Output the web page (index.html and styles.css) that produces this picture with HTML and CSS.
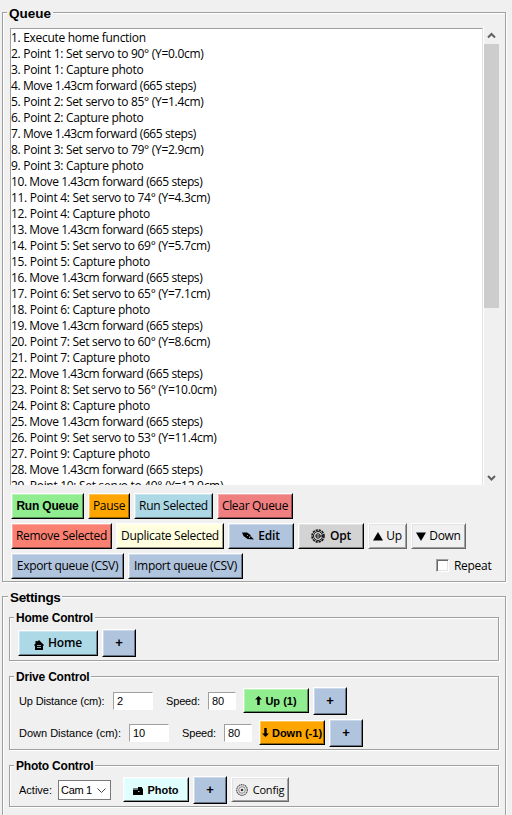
FILE: index.html
```html
<!DOCTYPE html>
<html lang="en">
<head>
<meta charset="utf-8">
<title>Queue</title>
<link rel="stylesheet" href="styles.css">
</head>
<body>
<section class="frame queue">
  <h2 class="title">Queue</h2>
  <div class="list-area">
    <ul class="list">
      <li>1. Execute home function</li>
      <li>2. Point 1: Set servo to 90° (Y=0.0cm)</li>
      <li>3. Point 1: Capture photo</li>
      <li class="move">4. Move 1.43cm forward (665 steps)</li>
      <li>5. Point 2: Set servo to 85° (Y=1.4cm)</li>
      <li>6. Point 2: Capture photo</li>
      <li class="move">7. Move 1.43cm forward (665 steps)</li>
      <li>8. Point 3: Set servo to 79° (Y=2.9cm)</li>
      <li>9. Point 3: Capture photo</li>
      <li class="move">10. Move 1.43cm forward (665 steps)</li>
      <li>11. Point 4: Set servo to 74° (Y=4.3cm)</li>
      <li>12. Point 4: Capture photo</li>
      <li class="move">13. Move 1.43cm forward (665 steps)</li>
      <li>14. Point 5: Set servo to 69° (Y=5.7cm)</li>
      <li>15. Point 5: Capture photo</li>
      <li class="move">16. Move 1.43cm forward (665 steps)</li>
      <li>17. Point 6: Set servo to 65° (Y=7.1cm)</li>
      <li>18. Point 6: Capture photo</li>
      <li class="move">19. Move 1.43cm forward (665 steps)</li>
      <li>20. Point 7: Set servo to 60° (Y=8.6cm)</li>
      <li>21. Point 7: Capture photo</li>
      <li class="move">22. Move 1.43cm forward (665 steps)</li>
      <li>23. Point 8: Set servo to 56° (Y=10.0cm)</li>
      <li>24. Point 8: Capture photo</li>
      <li class="move">25. Move 1.43cm forward (665 steps)</li>
      <li>26. Point 9: Set servo to 53° (Y=11.4cm)</li>
      <li>27. Point 9: Capture photo</li>
      <li class="move">28. Move 1.43cm forward (665 steps)</li>
      <li>29. Point 10: Set servo to 49° (Y=12.9cm)</li>
    </ul>
    <div class="scrollbar">
      <svg class="arrow" viewBox="0 0 15 17"><path d="M4 10.500L7.500 7L11 10.500" fill="none" stroke="#606060" stroke-width="2"/></svg>
      <div class="thumb"></div>
      <svg class="arrow" viewBox="0 0 15 17"><path d="M4 7L7.500 10.500L11 7" fill="none" stroke="#606060" stroke-width="2"/></svg>
    </div>
  </div>
  <div class="buttons">
    <button class="btn green w73 bold">Run Queue</button>
    <button class="btn orange w42">Pause</button>
    <button class="btn blue w79">Run Selected</button>
    <button class="btn coral w76">Clear Queue</button>
  </div>
  <div class="buttons">
    <button class="btn salmon w101">Remove Selected</button>
    <button class="btn cream w108">Duplicate Selected</button>
    <button class="btn steel w66 semi"><svg class="ic-pen" viewBox="0 0 12 8"><path d="M0 0.500L5 .5L8 2.500L9.500 5L12 7.500L5.500 7L1.500 4Z"/><path d="M5 3.500h1M7 5.500h1M7.500 4.500h1" stroke="#ddd" stroke-width=".7"/></svg>Edit</button>
    <button class="btn gray w66 semi"><svg class="ic-gear" viewBox="0 0 14 14"><circle cx="7" cy="7" r="6" fill="none" stroke="#111" stroke-width="1.600" stroke-dasharray="2.300 .84"/><circle cx="7" cy="7" r="4.500" fill="none" stroke="#111"/><circle cx="7" cy="7" r="2.200" fill="none" stroke="#111"/><path d="M5 7h7" stroke="#111"/></svg>Opt</button>
    <button class="btn plain w39"><svg class="ic-tri" viewBox="0 0 10 9"><path d="M0 8.500L5 0L10 8.500Z"/></svg>Up</button>
    <button class="btn plain w55"><svg class="ic-tri" viewBox="0 0 10 9"><path d="M0 .5H10L5 9Z"/></svg>Down</button>
  </div>
  <div class="buttons">
    <button class="btn steel w113">Export queue (CSV)</button>
    <button class="btn steel w115">Import queue (CSV)</button>
    <label class="repeat"><i class="check"></i>Repeat</label>
  </div>
</section>

<section class="frame settings">
  <h2 class="title">Settings</h2>
  <div class="frame group home">
    <h3 class="title">Home Control</h3>
    <div class="row">
      <button class="btn blue w80 semi"><svg class="ic-home" viewBox="0 0 10 10"><path d="M5 0L10 5L9 6V10H1V6L0 5L1.500 3.500V1H3.500V1.500Z"/><path d="M3 5.500h4M3 7.500h4" stroke="#add8e6" stroke-width=".8"/></svg>Home</button>
      <button class="btn steel plus">+</button>
    </div>
  </div>
  <div class="frame group drive">
    <h3 class="title">Drive Control</h3>
    <div class="row">
      <label class="lbl w94">Up Distance (cm):</label><div class="field w40">2</div>
      <label class="lbl speed">Speed:</label><div class="field w28">80</div>
      <button class="btn green w66 act"><svg class="ic-arr" viewBox="0 0 7 10"><path d="M3.500 0L7 3.500H4.700V9H2.300V3.500H0Z"/></svg>Up (1)</button>
      <button class="btn steel plus">+</button>
    </div>
    <div class="row">
      <label class="lbl w110">Down Distance (cm):</label><div class="field w40">10</div>
      <label class="lbl speed">Speed:</label><div class="field w28">80</div>
      <button class="btn orange w66 act"><svg class="ic-arr" viewBox="0 0 7 10"><path d="M3.500 9L7 5.500H4.700V0H2.300V5.500H0Z"/></svg>Down (-1)</button>
      <button class="btn steel plus">+</button>
    </div>
  </div>
  <div class="frame group photo">
    <h3 class="title">Photo Control</h3>
    <div class="row">
      <label class="lbl w39">Active:</label>
      <div class="select">Cam 1<svg viewBox="0 0 9 5"><path d="M.5 .5L4.500 4.500L8.500 .5" fill="none" stroke="#444"/></svg></div>
      <button class="btn cyan w66 act"><svg class="ic-cam" viewBox="0 0 10 8"><path d="M0 1.500H5V0H9V1.500H10V8H0Z"/><path d="M0 2.500H5" stroke="#9cc" stroke-width=".6"/><path d="M5 4.500h1.500" stroke="#9cc"/></svg>Photo</button>
      <button class="btn steel plus">+</button>
      <button class="btn plain w58 cfg"><svg class="ic-cog" viewBox="0 0 12 12"><circle cx="6" cy="6" r="5.300" fill="none" stroke="#555" stroke-width="1.200" stroke-dasharray="1.600 .5"/><circle cx="6" cy="6" r="3.300" fill="none" stroke="#888"/><circle cx="6" cy="6" r="1.300" fill="#333"/></svg>Config</button>
    </div>
  </div>
</section>
</body>
</html>
```
FILE: styles.css
```css
* { box-sizing: border-box; }
body {
  margin: 0;
  padding: 12px 6px 0 2px;
  height: 815px;
  overflow: hidden;
  background: #f0f0f0;
  color: #000;
  font: 12px/16px "Open Sans", "Noto Sans", sans-serif;
  letter-spacing: -0.3px;
}
.frame {
  width: 504px;
  border: 1px solid #a0a0a0;
  box-shadow: 1px 1px 0 #fff, inset 1px 1px 0 #fff;
}
.title {
  width: max-content;
  height: 16px;
  margin: -8px 0 0 4px;
  padding: 0 2px;
  background: #f0f0f0;
  font: bold 13.5px/18px "Liberation Sans", Arial, sans-serif;
  letter-spacing: 0;
}
.queue { height: 570px; margin-bottom: 14px; padding-left: 7px; }
.queue > .title { margin-left: -3px; }

.list-area { display: flex; height: 459px; margin-top: 6px; }
.list {
  width: 473px;
  height: 457px;
  margin: 1px 0 0;
  padding: 0;
  overflow: hidden;
  list-style: none;
  background: #fff;
  border: 1px solid #a0a0a0;
  border-width: 1px 1px 0;
  border-right-color: #e3e3e3;
  white-space: nowrap;
}
.list li { height: 16px; line-height: 17px; }
.list .move { letter-spacing: -0.41px; }
.scrollbar {
  width: 16px;
  height: 459px;
  border-left: 1px solid #fff;
  display: flex;
  flex-direction: column;
}
.arrow { width: 15px; height: 17px; flex: none; }
.thumb { height: 264px; margin-bottom: 161px; background: #cdcdcd; }

.buttons { display: flex; gap: 4px; margin: 7px 0 0 1px; }
.buttons + .buttons { margin-top: 4px; }
button { font: inherit; letter-spacing: inherit; color: inherit; }
.btn {
  display: flex;
  align-items: center;
  justify-content: center;
  flex: none;
  height: 26px;
  margin: 0;
  padding: 0;
  border: 1px solid;
  border-color: #fff #000 #000 #fff;
  box-shadow: inset 1px 1px 0 rgba(255,255,255,.35), inset -1px -1px 0 rgba(0,0,0,.4);
  white-space: nowrap;
}
.green { background: #90ee90; }
.orange { background: #ffa500; }
.blue { background: #add8e6; }
.coral { background: #f08080; }
.salmon { background: #fa8072; }
.cream { background: #ffffe0; }
.steel { background: #b0c4de; }
.gray { background: #d3d3d3; }
.cyan { background: #e0ffff; }
.plain { background: #f0f0f0; border-color: #fff #696969 #696969 #fff; box-shadow: inset 1px 1px 0 #e3e3e3, inset -1px -1px 0 #a0a0a0; }
.bold, .act { padding-bottom: 1px; font: bold 12px/16px "Liberation Sans", Arial, sans-serif; letter-spacing: -0.2px; }
.act { padding-bottom: 0; font-size: 11px; letter-spacing: 0; }
.semi { font-weight: 600; letter-spacing: -0.15px; }
.w28 { width: 28px; } .w39 { width: 39px; } .w40 { width: 40px; } .w42 { width: 42px; }
.w55 { width: 55px; } .w58 { width: 58px; } .w66 { width: 66px; } .w73 { width: 73px; }
.w76 { width: 76px; } .w79 { width: 79px; } .w80 { width: 80px; } .w94 { width: 94px; }
.w101 { width: 101px; } .w108 { width: 108px; } .w110 { width: 110px; }
.w113 { width: 113px; } .w115 { width: 115px; }

.repeat { display: flex; align-items: center; margin-left: 189px; }
.check {
  width: 13px;
  height: 13px;
  margin: -1px 5px 0 0;
  background: #fff;
  border: 1px solid;
  border-color: #a0a0a0 #fff #fff #a0a0a0;
  box-shadow: inset 1px 1px 0 #696969, inset -1px -1px 0 #e3e3e3;
}

.ic-pen { width: 12px; height: 8px; margin-right: 4px; }
.ic-gear { width: 14px; height: 14px; margin-right: 5px; }
.ic-tri { width: 10px; height: 9px; margin-right: 3px; }
.ic-home { width: 10px; height: 10px; margin: 4px 4px 0 0; }
.ic-arr { width: 7px; height: 10px; margin-right: 3px; }
.ic-cam { width: 10px; height: 8px; margin: 3px 4px 0 0; }
.ic-cog { width: 12px; height: 12px; margin-right: 5px; }

.settings { height: 240px; padding-left: 6px; }
.settings > .title { margin-left: -1px; letter-spacing: -0.35px; }
.group { width: 490px; }
.group .title { font-size: 12px; line-height: 17px; letter-spacing: -0.2px; }
.home { height: 44px; margin-top: 12px; }
.drive { height: 74px; margin-top: 15px; }
.photo { height: 42px; margin-top: 15px; }
.row { display: flex; align-items: center; height: 28px; margin: 3px 0 0 8px; }
.drive .row, .photo .row { margin: 2px 0 0 9px; }
.drive .row + .row { margin-top: 4px; }
.plus {
  width: 34px;
  height: 28px;
  margin-left: 4px;
  font: bold 13px/16px "Liberation Sans", Arial, sans-serif;
}
.lbl, .field, .select { font: 11px/16px "Liberation Sans", Arial, sans-serif; letter-spacing: 0; }
.lbl { flex: none; }
.w94 { letter-spacing: -0.15px; }
.speed { width: 42px; margin-left: 13px; letter-spacing: -0.15px; }
.field {
  height: 18px;
  padding-left: 3px;
  background: #fff;
  border: 1px solid;
  border-color: #a0a0a0 #fff #fff #a0a0a0;
}
.row .act, .row .cfg { align-self: flex-start; height: 25px; margin: 1px 0 0 7px; }
.select {
  display: flex;
  align-items: center;
  justify-content: space-between;
  width: 53px;
  height: 20px;
  padding: 0 4px 0 2px;
  background: #fff;
  border: 1px solid #7a7a7a;
  letter-spacing: -0.3px;
}
.select svg { width: 9px; height: 5px; }
.row .select + .act { margin-left: 12px; }
.row .cfg { margin-left: 4px; font-size: 11px; letter-spacing: -0.2px; }
```
